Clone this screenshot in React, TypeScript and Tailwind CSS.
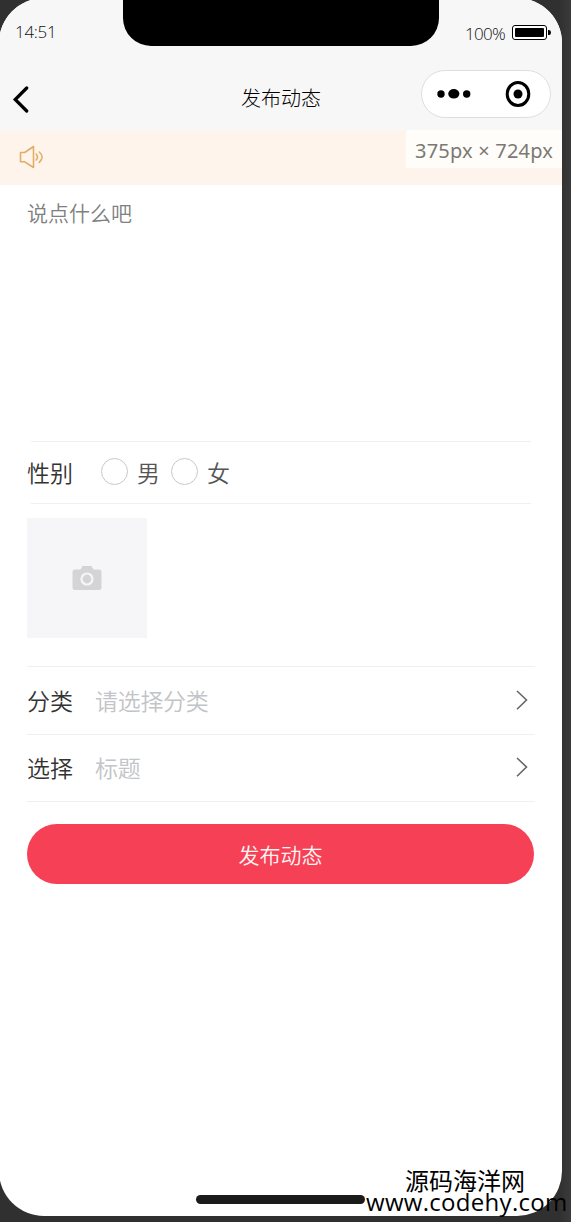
import React from 'react';

function StatusBar() {
  return (
    <div className="relative flex h-[48px] items-start justify-between pl-[15px] pr-[11px]">
      <span className="mt-[21px] text-[17px] leading-[22px] tracking-[-0.3px] text-[#111]">14:51</span>
      <div className="absolute left-[123px] top-0 h-[46px] w-[316px] rounded-b-[28px] bg-black" />
      <div className="mt-[21px] flex items-center">
        <span className="mt-[2px] text-[17px] leading-[22px] tracking-[-0.7px] text-[#111]">100%</span>
        <svg className="ml-[7px] mt-[-1px]" width="39" height="15" viewBox="0 0 39 15">
          <rect x="0.5" y="0.5" width="34" height="14" rx="2.5" fill="white" stroke="black" />
          <rect x="3" y="3" width="29" height="9" rx="1" />
          <path d="M36 5h1a2 2.5 0 0 1 0 5h-1z" />
        </svg>
      </div>
    </div>
  );
}

function NavBar() {
  return (
    <div className="relative flex h-[82px] items-center justify-center">
      <svg className="absolute left-[11px] top-[37px]" width="18" height="28" viewBox="0 0 18 28" fill="none" stroke="black" strokeWidth="3.2">
        <path d="M15.7 3 4.2 14.5 15.7 26" strokeLinecap="round" />
      </svg>
      <h1 className="mt-[20px] text-[20px] font-light leading-[28px] text-black">发布动态</h1>
      <div className="absolute left-[421px] top-[22px] flex h-[48px] w-[130px] items-center justify-between rounded-full border border-[#dedede] bg-white pl-[15px] pr-[19px]">
        <svg width="34" height="10" viewBox="0 0 34 10">
          <circle cx="4" cy="5" r="3.7" />
          <ellipse cx="16.8" cy="4.8" rx="5.6" ry="4.8" />
          <circle cx="29.7" cy="5" r="3.7" />
        </svg>
        <svg width="26" height="28" viewBox="0 0 26 28">
          <ellipse cx="13" cy="14" rx="10.8" ry="11.5" fill="none" stroke="black" strokeWidth="3" />
          <circle cx="13" cy="14" r="4.5" />
        </svg>
      </div>
    </div>
  );
}

function NoticeBar() {
  return (
    <div className="relative flex h-[54px] items-center bg-[#fff4eb] pl-[19px]">
      <svg className="-mt-[2px]" width="25" height="24" viewBox="0 0 25 24" fill="none" stroke="#e0ae66" strokeWidth="1.6" strokeLinejoin="round">
        <path d="M1.5 7.5h4.2L14.5 1.5v21L5.7 16.8H1.5z" />
        <path d="M17.2 9q2.5 3 0 6M20.3 7q5.6 5 0 10.4" strokeLinecap="round" />
      </svg>
      <div className="absolute -top-px right-0 flex h-[38px] w-[156px] items-center bg-[#fffdf9] pl-[9px] pt-[3px] text-[20px] leading-[28px] text-[#7b7974]">
        <span className="whitespace-nowrap font-[Noto_Sans,Noto_Sans_CJK_SC,sans-serif] tracking-[0.2px]">375px × 724px</span>
      </div>
    </div>
  );
}

function Radio({ label }: { label: string }) {
  return (
    <label className="flex items-center text-[23px] font-[350] leading-[34px] text-[#555]">
      <span className="mr-[9px] mt-[-3px] h-[27px] w-[27px] rounded-full border border-[#c8c8c8] bg-white" />
      {label}
    </label>
  );
}

function PickerRow({ label, placeholder, className }: { label: string; placeholder: string; className: string }) {
  return (
    <div className={`flex items-center border-b border-[#f0f0f0] text-[23px] font-[350] ${className}`}>
      <span className="mt-px w-[68px] text-[#333]">{label}</span>
      <span className="mt-px flex-1 tracking-[-0.3px] text-[#c2c4c7]">{placeholder}</span>
      <svg className="-mt-[2px] mr-[6px]" width="14" height="22" viewBox="0 0 14 22" fill="none" stroke="#666" strokeWidth="1.6">
        <path d="M2 2 11.5 11 2 20.2" />
      </svg>
    </div>
  );
}

export default function App() {
  return (
    <div className="relative h-[1222px] w-[571px] overflow-hidden bg-linear-to-r from-[#303030] from-98% to-[#3b3b3b] font-[Open_Sans,Noto_Sans_CJK_SC,sans-serif]">
      <div className="-ml-px -mt-[2px] flex h-[1218px] w-[563px] flex-col overflow-hidden rounded-[45px] bg-white pl-px pt-[2px]">
        <header className="shrink-0 bg-[#f7f7f7] font-light">
          <StatusBar />
          <NavBar />
        </header>
        <div className="shrink-0 bg-[#fdf6f0] pt-px">
          <NoticeBar />
        </div>
        <main className="px-[27px]">
          <div className="h-[256px] pt-[12px] text-[21px] font-[350] leading-[32px] text-[#808080]">说点什么吧</div>
          <div className="relative flex h-[63px] items-center">
            <div className="absolute inset-x-[4px] inset-y-0 border-y border-[#f0f0f0]" />
            <span className="relative mt-[2px] w-[74px] text-[23px] font-[350] text-[#333]">性别</span>
            <div className="relative flex items-center gap-[11px]">
              <Radio label="男" />
              <Radio label="女" />
            </div>
          </div>
          <div className="h-[163px] border-b border-[#f0f0f0] pt-[14px]">
            <div className="flex h-[120px] w-[120px] items-center justify-center bg-[#f6f6f9]">
              <svg width="30" height="26" viewBox="0 0 30 26">
                <path fill="#d4d4d7" d="M3 4.5h5.5L10.5 1h9l2 3.5H27q2.5 0 2.5 2.5v15q0 3-2.5 3H3Q.5 25 .5 22V7Q.5 4.5 3 4.5z" />
                <circle cx="15" cy="14" r="5.5" fill="#d4d4d7" stroke="#f6f6f9" strokeWidth="2.2" />
              </svg>
            </div>
          </div>
          <PickerRow label="分类" placeholder="请选择分类" className="h-[68px]" />
          <PickerRow label="选择" placeholder="标题" className="h-[67px]" />
          <button className="mt-[22px] block h-[60px] w-[507px] rounded-full bg-[#f54056] pt-[4px] text-[21px] font-[350] text-[#fff4f4]">发布动态</button>
        </main>
      </div>
      <div className="absolute left-[196px] top-[1195px] h-[9px] w-[169px] rounded-full bg-[#1b1b1b]" />
      <div className="absolute left-[366px] top-[1169px] w-[204px] whitespace-nowrap text-black">
        <div className="pl-[39px] text-[24px] leading-[24px]">源码海洋网</div>
        <div className="-mt-[2px] text-[24px] leading-[21px] tracking-[0.3px]">www.codehy.com</div>
      </div>
    </div>
  );
}
